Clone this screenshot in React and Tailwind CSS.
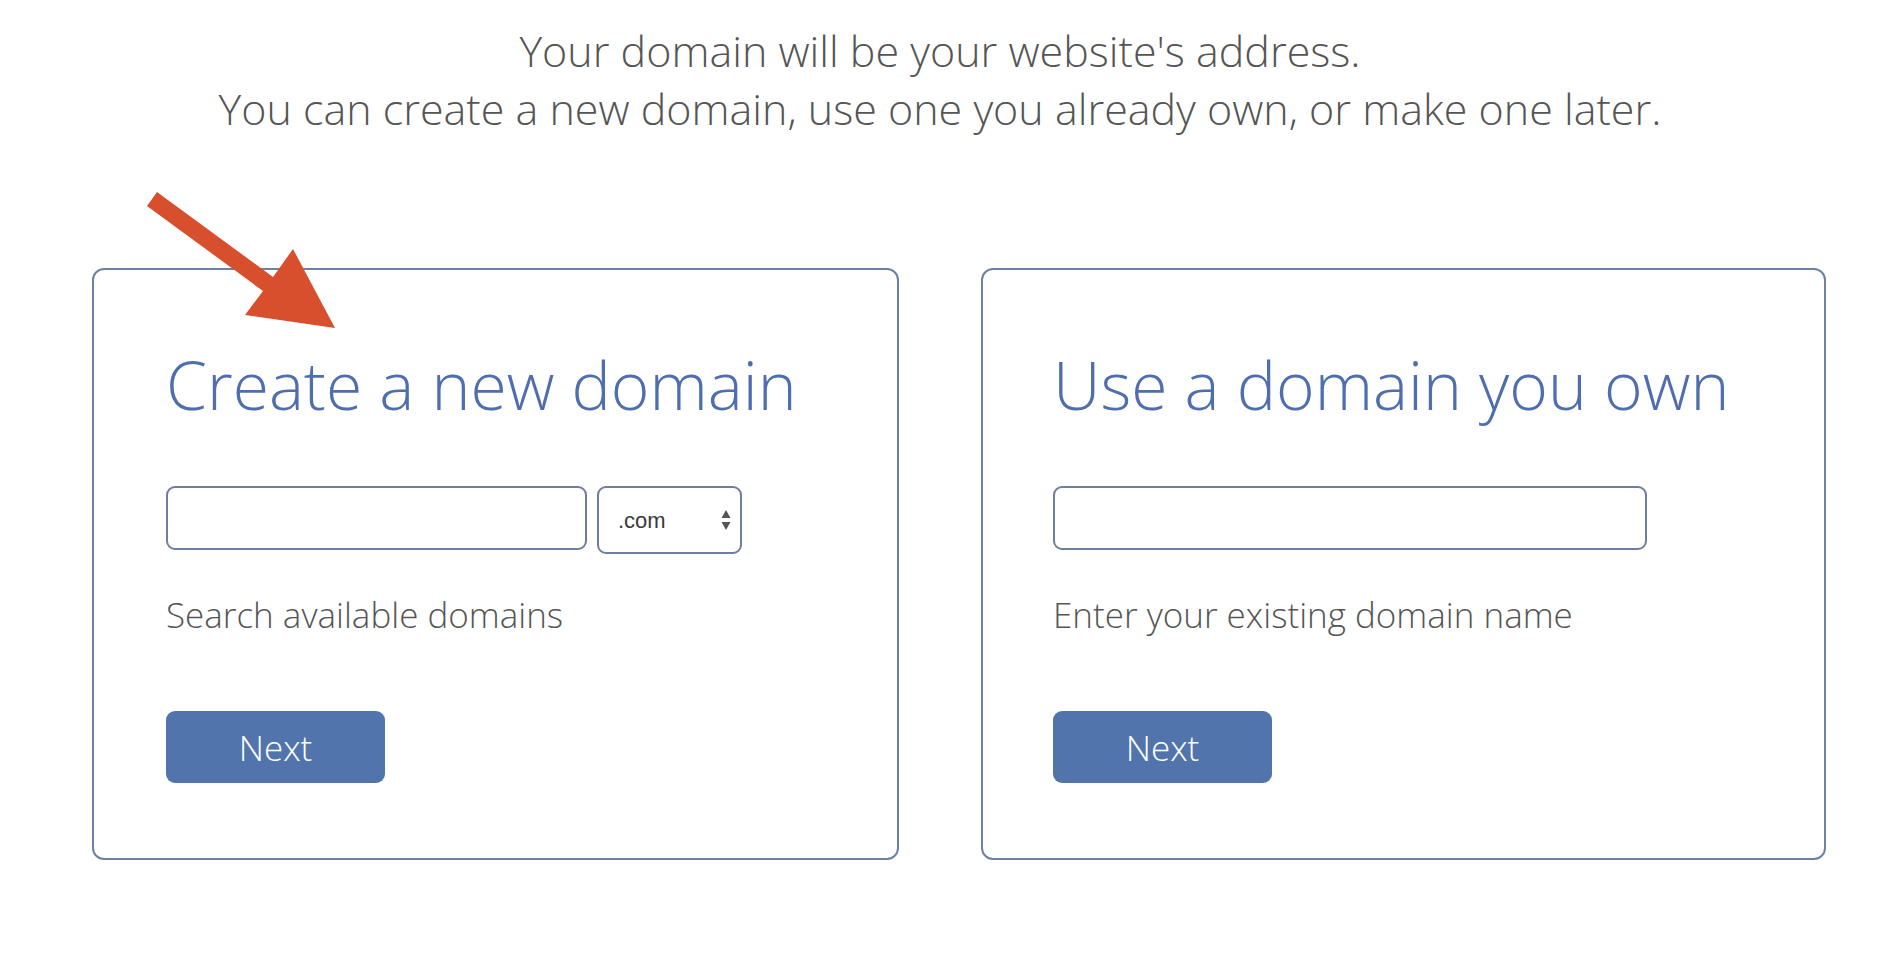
import React from "react";

function Arrow() {
  return (
    <svg
      className="absolute left-0 top-0 pointer-events-none"
      width="400"
      height="400"
      viewBox="0 0 400 400"
    >
      <polygon
        points="157,192 147,206 263,291 245,315 335,328 293,249 273,277"
        fill="#d84f2e"
      />
    </svg>
  );
}

function Card({ title, helper, withSelect, width, inputWidth, pad }) {
  return (
    <div
      className={`${width} ${pad} h-[592px] shrink-0 rounded-[12px] border-2 border-[#6d80a6] bg-white pt-[81px] flex flex-col`}
    >
      <h2 className="text-[66px] leading-none font-light text-[#4e6eb0] whitespace-nowrap">
        {title}
      </h2>
      <div className="mt-[69px] h-[64px] flex items-start gap-[10px]">
        <div className={`${inputWidth} h-[64px] rounded-[9px] border-2 border-[#6d7e9f] bg-white`} />
        {withSelect && (
          <div className="w-[145px] h-[68px] shrink-0 rounded-[9px] border-2 border-[#6d7e9f] bg-white flex items-center justify-between pl-[19px] pr-[9px]">
            <span className="text-[22px] text-[#3a3a3a] font-['Liberation_Sans',Arial,sans-serif]">.com</span>
            <svg width="10" height="22" viewBox="0 0 10 22">
              <polygon points="5,1 9.5,9 0.5,9" fill="#555" />
              <polygon points="0.5,13 9.5,13 5,21" fill="#555" />
            </svg>
          </div>
        )}
      </div>
      <p className="mt-[42px] text-[35px] leading-[45px] font-light text-[#555]">{helper}</p>
      <div className="mt-[74px]">
        <button className="w-[219px] h-[72px] rounded-[9px] bg-[#5174ad] text-white text-[35px] font-light leading-none">
          Next
        </button>
      </div>
    </div>
  );
}

export default function App() {
  return (
    <div className="relative w-full h-[970px] bg-white overflow-hidden font-['Open_Sans','Noto_Sans',sans-serif]">
      <div className="pt-[22px] text-center text-[43px] leading-[58px] font-light text-[#555] pr-[20px]">
        <p>Your domain will be your website's address.</p>
        <p>You can create a new domain, use one you already own, or make one later.</p>
      </div>
      <div className="mt-[130px] pl-[92px] flex gap-[82px]">
        <Card
          title="Create a new domain"
          helper="Search available domains"
          withSelect
          width="w-[807px]"
          inputWidth="w-[421px]"
          pad="pl-[72px]"
        />
        <Card
          title="Use a domain you own"
          helper="Enter your existing domain name"
          width="w-[845px]"
          inputWidth="w-[594px]"
          pad="pl-[70px]"
        />
      </div>
      <Arrow />
    </div>
  );
}
